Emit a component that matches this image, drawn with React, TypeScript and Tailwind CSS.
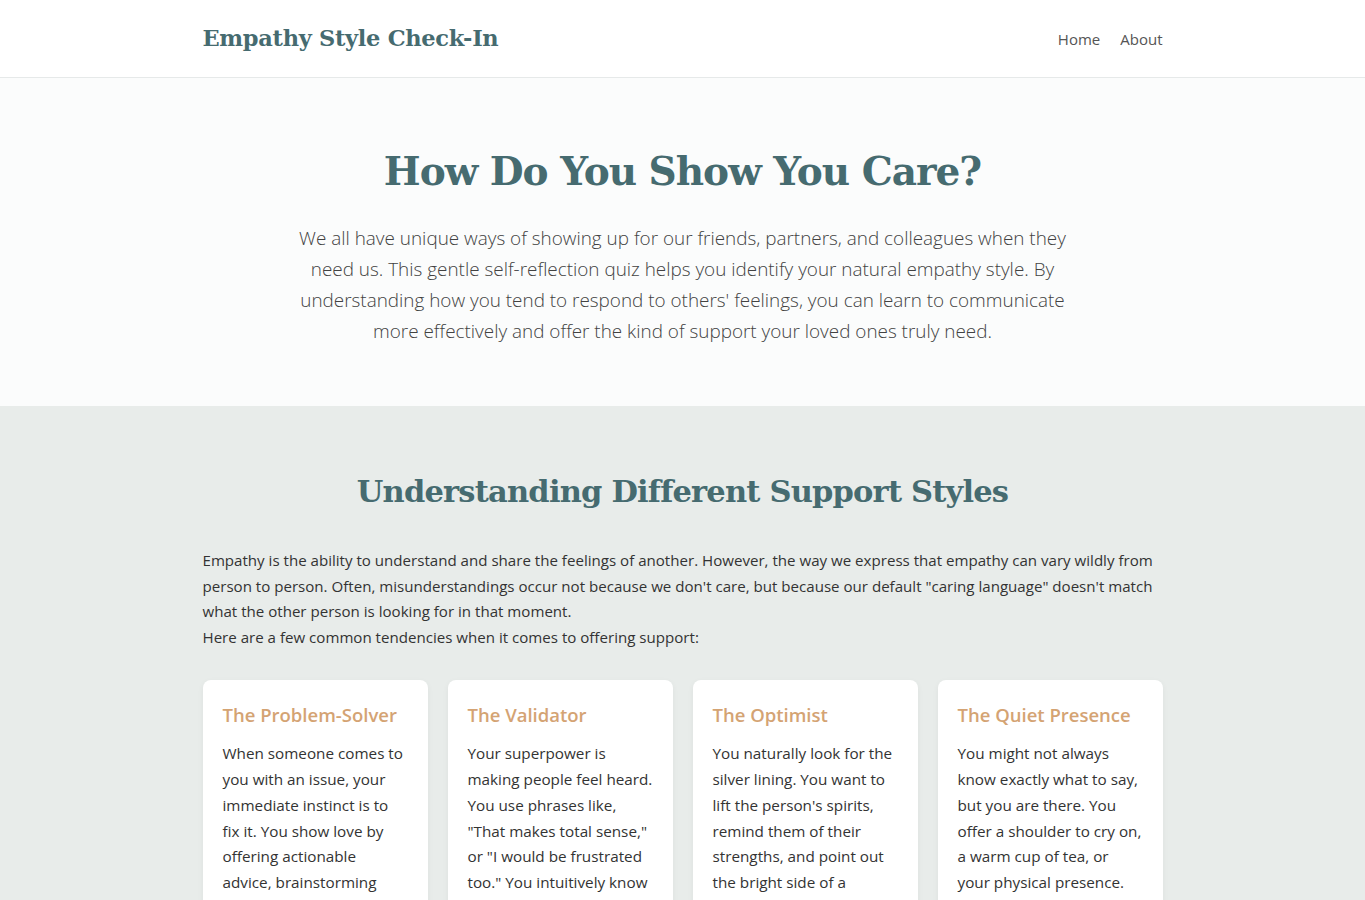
import React from "react";

const serif = { fontFamily: '"DejaVu Serif", Georgia, serif' };

const styles = [
  {
    title: "The Problem-Solver",
    body: "When someone comes to you with an issue, your immediate instinct is to fix it. You show love by offering actionable advice, brainstorming solutions, and taking practical steps to make things better.",
  },
  {
    title: "The Validator",
    body: 'Your superpower is making people feel heard. You use phrases like, "That makes total sense," or "I would be frustrated too." You intuitively know that sometimes people just need to vent.',
  },
  {
    title: "The Optimist",
    body: "You naturally look for the silver lining. You want to lift the person's spirits, remind them of their strengths, and point out the bright side of a difficult situation.",
  },
  {
    title: "The Quiet Presence",
    body: "You might not always know exactly what to say, but you are there. You offer a shoulder to cry on, a warm cup of tea, or your physical presence.",
  },
];

export default function App() {
  return (
    <div
      className="min-h-screen bg-[#e8ecea] text-[#333]"
      style={{ fontFamily: '"Open Sans", "Noto Sans", sans-serif' }}
    >
      <header className="h-[78px] border-b border-[#e6e9e9] bg-white">
        <div className="mx-auto flex h-full w-[960px] items-center justify-between">
          <div className="text-[22.5px] font-bold tracking-[-0.3px] text-[#466b70]" style={serif}>
            Empathy Style Check-In
          </div>
          <nav className="flex gap-5 pt-[2px] text-[15px] text-[#555]">
            <a href="#">Home</a>
            <a href="#">About</a>
          </nav>
        </div>
      </header>

      <section className="bg-[#fbfcfc] pt-[69px] pb-[59px]">
        <div className="mx-auto w-[960px] text-center">
          <h1 className="text-[39px] font-bold leading-tight tracking-[-1px] text-[#466b70]" style={serif}>
            How Do You Show You Care?
          </h1>
          <p className="mx-auto mt-[27px] max-w-[790px] text-[18.9px] font-light leading-[31px] text-[#424242]">
            We all have unique ways of showing up for our friends, partners, and colleagues when they need us. This
            gentle self-reflection quiz helps you identify your natural empathy style. By understanding how you tend to
            respond to others' feelings, you can learn to communicate more effectively and offer the kind of support
            your loved ones truly need.
          </p>
        </div>
      </section>

      <section className="pt-[66px] pb-16">
        <div className="mx-auto w-[960px]">
          <h2 className="text-center text-[30.5px] font-bold leading-tight tracking-[-0.8px] text-[#466b70]" style={serif}>
            Understanding Different Support Styles
          </h2>
          <div className="mt-[38px] text-[15.1px] leading-[25.7px]">
            <p>
              Empathy is the ability to understand and share the feelings of another. However, the way we express that
              empathy can vary wildly from person to person. Often, misunderstandings occur not because we don't care,
              but because our default "caring language" doesn't match what the other person is looking for in that
              moment.
            </p>
            <p>Here are a few common tendencies when it comes to offering support:</p>
          </div>
          <div className="mt-[29px] grid grid-cols-4 gap-5">
            {styles.map((s) => (
              <div key={s.title} className="rounded-lg bg-white px-5 pt-[21px] pb-5 shadow-[0_2px_6px_rgba(0,0,0,0.05)]">
                <h3 className="text-[18.5px] font-semibold text-[#d4a373]">{s.title}</h3>
                <p className="mt-[13px] text-[15.25px] leading-[25.7px] text-[#333]">{s.body}</p>
              </div>
            ))}
          </div>
        </div>
      </section>
    </div>
  );
}
